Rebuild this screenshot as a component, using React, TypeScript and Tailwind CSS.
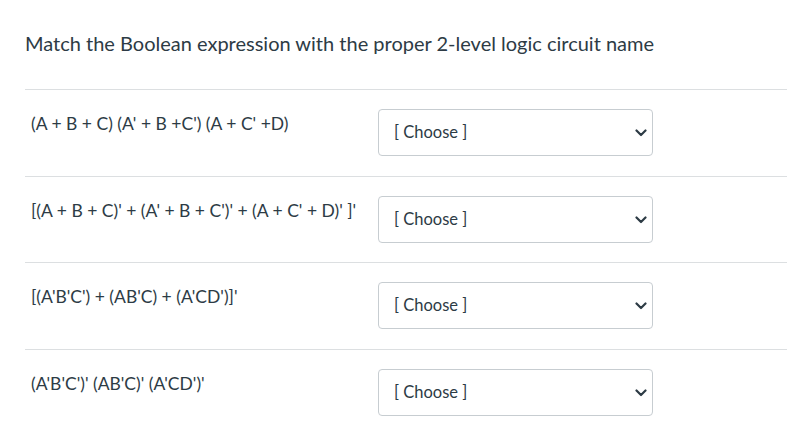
import React from 'react';

const EXPRESSIONS = [
  "(A + B + C) (A' + B +C') (A + C' +D)",
  "[(A + B + C)' + (A' + B + C')' + (A + C' + D)' ]'",
  "[(A'B'C') + (AB'C) + (A'CD')]'",
  "(A'B'C')' (AB'C)' (A'CD')'",
];

const ChoiceRow: React.FC<{ text: string }> = ({ text }) => {
  return (
    <div className="flex items-start border-t border-[#dcdfe1] pt-[19px] pb-[19.5px]">
      <div className="w-[353px] pl-[6px] pt-[4px] text-[17.5px] leading-[22px] text-[#2d3b45]">{text}</div>
      <div className="relative flex h-[47px] w-[275px] items-center rounded-[4px] border border-[#c7cdd1] bg-white pl-[15px] text-[16.5px] text-[#2d3b45]">
        <span>[ Choose ]</span>
        <svg className="absolute right-[5px] top-[19px]" width="12" height="8" viewBox="0 0 12 8">
          <path d="M1.5 1.5 L6 6 L10.5 1.5" fill="none" stroke="#2d3b45" strokeWidth="2.2" strokeLinecap="round" strokeLinejoin="round" />
        </svg>
      </div>
    </div>
  );
};

export default function App() {
  return (
    <div className="min-h-[446px] bg-white pl-[25px] pt-[31px]" style={{ fontFamily: 'Lato, "Open Sans", sans-serif' }}>
      <h1 className="mb-[34px] text-[20px] leading-[24px] text-[#2d3b45]">
        Match the Boolean expression with the proper 2-level logic circuit name
      </h1>
      {EXPRESSIONS.map((e) => (
        <ChoiceRow key={e} text={e} />
      ))}
    </div>
  );
}
